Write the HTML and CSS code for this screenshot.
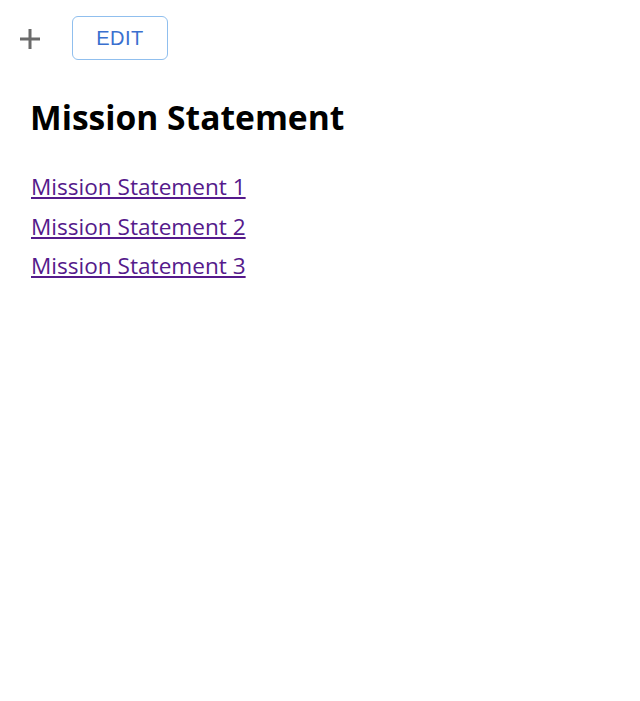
FILE: index.html
```html
<!DOCTYPE html>
<html>
<head>
<meta charset="utf-8">
<link rel="stylesheet" href="styles.css">
</head>
<body>
<div class="toolbar">
  <button class="add" aria-label="Add">
    <svg width="22" height="22" viewBox="0 0 22 22"><path d="M11 1v20M1 11h20" stroke="#6b6b6b" stroke-width="3" fill="none"/></svg>
  </button>
  <button class="edit">EDIT</button>
</div>
<main class="content">
  <h1 class="title">Mission Statement</h1>
  <ul class="links">
    <li><a href="#m1">Mission Statement 1</a></li>
    <li><a href="#m2">Mission Statement 2</a></li>
    <li><a href="#m3">Mission Statement 3</a></li>
  </ul>
</main>
</body>
</html>
```
FILE: styles.css
```css
html, body { margin: 0; padding: 0; background: #fff; }
body { font-family: "Open Sans", "Noto Sans", sans-serif; }
.toolbar {
  display: flex;
  align-items: center;
  gap: 31px;
  padding: 16px 0 0 19px;
  height: 44px;
}
.add {
  border: none; background: none; padding: 0; margin: 0;
  width: 22px; height: 22px; display: flex; margin-top: 2px;
}
.edit {
  width: 96px; height: 44px;
  border: 1px solid #90bfee;
  border-radius: 6px;
  background: #fff;
  color: #3a70cf;
  font-family: "Liberation Sans", Arial, sans-serif;
  font-size: 20px;
  letter-spacing: 0.5px;
  padding: 0;
}
.content { padding: 0 31px; }
.title {
  margin: 34px 0 0 -1px;
  font-size: 33.6px;
  font-weight: 700;
  line-height: 46px;
  color: #000;
}
.links { list-style: none; margin: 33px 0 0 0; padding: 0; }
.links li { height: 39.5px; }
.links a {
  color: #551a8b;
  font-size: 22.6px;
  line-height: 28px;
}
```
